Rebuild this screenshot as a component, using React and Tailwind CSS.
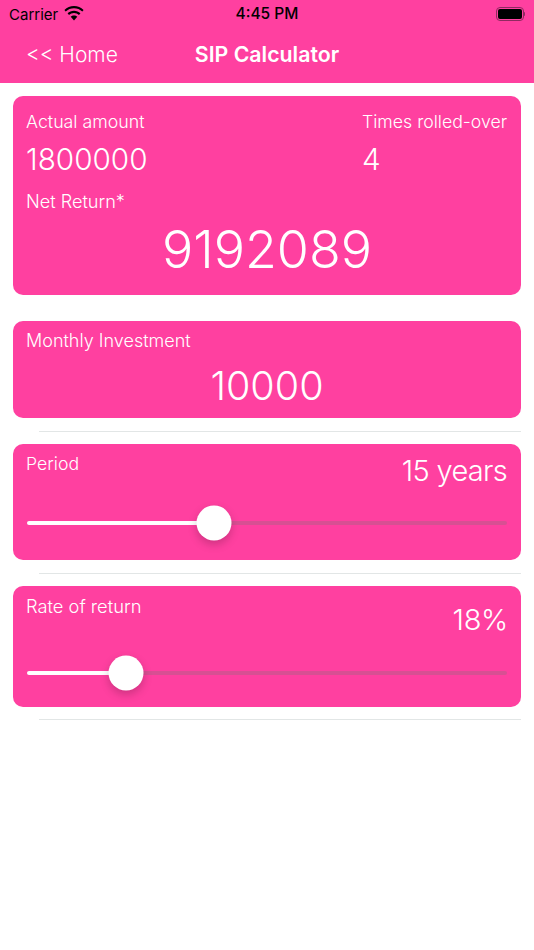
const font = { fontFamily: 'Inter, "Liberation Sans", sans-serif' }

function Slider({ percent }) {
  return (
    <div className="relative h-[4px] rounded-full bg-[#d84f93]">
      <div className="h-full rounded-full bg-white" style={{ width: `${percent}%` }} />
      <div
        className="absolute top-1/2 w-[35px] h-[35px] -translate-x-1/2 -translate-y-1/2 rounded-full bg-white shadow-[0_4px_10px_rgba(0,0,0,0.2)]"
        style={{ left: `${percent}%` }}
      />
    </div>
  )
}

function Divider({ className }) {
  return <div className={`ml-[39px] mr-[13px] h-px bg-[#e2e6e6] ${className}`} />
}

export default function App() {
  return (
    <div className="w-[534px] h-[950px] bg-white text-white overflow-hidden" style={font}>
      {/* Header */}
      <div className="h-[83px] bg-[#ff40a0]">
        <div className="relative h-[28px] flex items-center px-[9px] text-black">
          <span className="text-[15px] leading-none">Carrier</span>
          <svg className="ml-[6px] mb-[2px]" width="20" height="15" viewBox="0 0 20 15" fill="black">
            <path d="M10 2.200c3.200 0 6.100 1.200 8.300 3.300l1.300-1.500C17 1.500 13.700 0 10 0S3 1.500.4 4l1.300 1.500C3.900 3.400 6.800 2.200 10 2.200z" />
            <path d="M10 6.900c1.900 0 3.700.7 5 2l1.400-1.600C14.700 5.700 12.500 4.700 10 4.700s-4.700 1-6.400 2.600L5 8.900c1.300-1.300 3.100-2 5-2z" />
            <path d="M10 9.500c-1.300 0-2.400.5-3.300 1.300L10 14.500l3.300-3.700c-.9-.8-2-1.300-3.300-1.300z" />
          </svg>
          <span className="absolute left-0 right-0 text-center text-[15.500px] font-medium leading-none">4:45 PM</span>
          <div className="ml-auto flex items-center">
            <div className="w-[28px] h-[14px] rounded-[4px] border border-[#8f2a60] p-[1px]">
              <div className="w-full h-full rounded-[2px] bg-black" />
            </div>
            <div className="w-[1.500px] h-[4px] rounded-r bg-[#8f2a60]" />
          </div>
        </div>
        <div className="relative h-[55px] flex items-center px-[26px]">
          <span className="text-[21px] font-light leading-none mb-[2px]">{'<< Home'}</span>
          <span className="absolute left-0 right-0 text-center text-[21.300px] font-semibold leading-none mb-[1px]">SIP Calculator</span>
        </div>
      </div>

      {/* Summary */}
      <div className="mx-[13px] mt-[13px] h-[199px] rounded-[10px] bg-[#ff40a0] px-[13px] pt-[15px]">
        <div className="flex justify-between">
          <div>
            <div className="text-[17.800px] font-light leading-[22px]">Actual amount</div>
            <div className="text-[29.700px] font-light leading-[36px] mt-[8px]">1800000</div>
          </div>
          <div className="w-[146px]">
            <div className="text-[17.700px] font-light leading-[22px]">Times rolled-over</div>
            <div className="text-[29.700px] font-light leading-[36px] mt-[8px]">4</div>
          </div>
        </div>
        <div className="text-[18.100px] font-light leading-[22px] mt-[13px]">Net Return*</div>
        <div className="text-[52px] font-light leading-[60px] text-center mt-[8px]">9192089</div>
      </div>

      {/* Monthly investment */}
      <div className="mx-[13px] mt-[26px] h-[97px] rounded-[10px] bg-[#ff40a0] px-[13px] pt-[9px]">
        <div className="text-[18px] font-light leading-[22px]">Monthly Investment</div>
        <div className="text-[39.500px] font-light leading-[44px] text-center mt-[12px]">10000</div>
      </div>
      <Divider className="mt-[13px]" />

      {/* Period */}
      <div className="mx-[13px] mt-[12px] h-[116px] rounded-[10px] bg-[#ff40a0] px-[14px] pt-[9px]">
        <div className="flex justify-between">
          <span className="text-[17.700px] font-light leading-[22px] -ml-px">Period</span>
          <span className="text-[29px] font-light leading-[36px] tracking-[-0.7px]">15 years</span>
        </div>
        <div className="mt-[32px]">
          <Slider percent={39} />
        </div>
      </div>
      <Divider className="mt-[13px]" />

      {/* Rate of return */}
      <div className="mx-[13px] mt-[12px] h-[121px] rounded-[10px] bg-[#ff40a0] px-[14px] pt-[9px]">
        <div className="flex justify-between">
          <span className="text-[18.300px] font-light leading-[22px] -ml-px">Rate of return</span>
          <span className="text-[29px] font-light leading-[36px] mt-[7px] -mr-[1px] tracking-[-0.3px]">18%</span>
        </div>
        <div className="mt-[33px]">
          <Slider percent={20.700} />
        </div>
      </div>
      <Divider className="mt-[12px]" />
    </div>
  )
}
